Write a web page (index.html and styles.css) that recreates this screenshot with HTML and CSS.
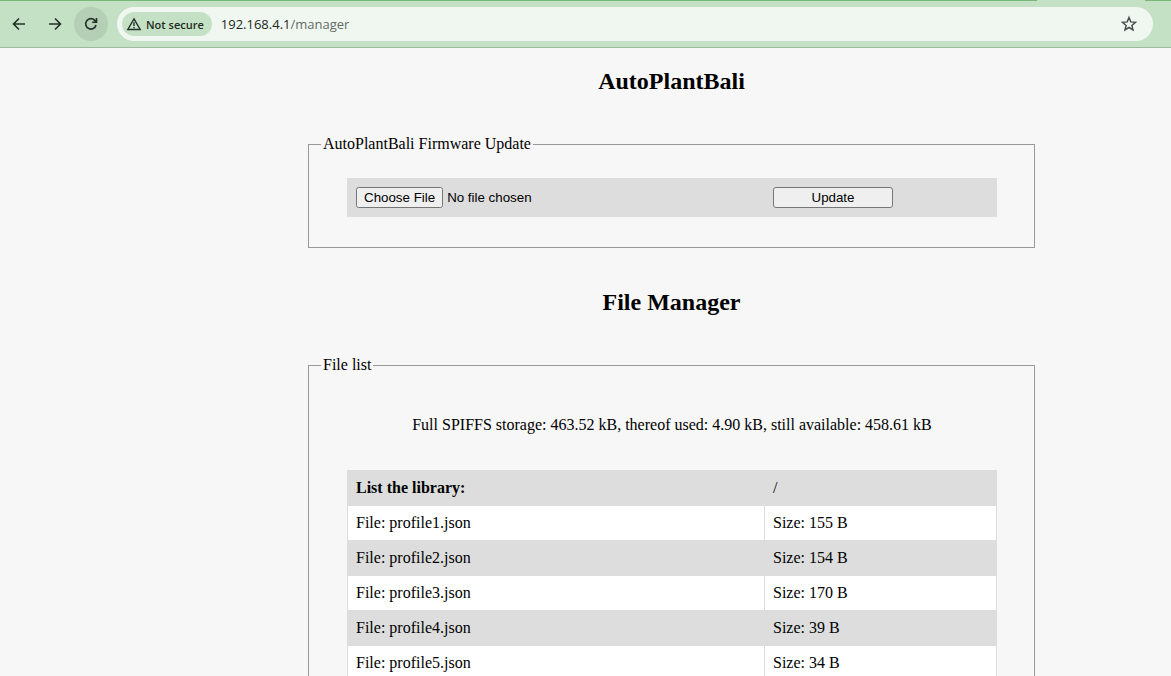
FILE: index.html
```html
<!DOCTYPE html>
<html lang="en">
<head>
<meta charset="utf-8">
<title>AutoPlantBali</title>
<link rel="stylesheet" href="styles.css">
</head>
<body>
<div class="tabstrip"><span class="active-tab"></span></div>
<header class="toolbar">
  <button class="nav" type="button" aria-label="Back"><svg width="16" height="16" viewBox="0 0 16 16"><path d="M14 8H3M8 2.5 2.5 8 8 13.5"/></svg></button>
  <button class="nav" type="button" aria-label="Forward"><svg width="16" height="16" viewBox="0 0 16 16"><path d="M2 8h11M8 2.5 13.500 8 8 13.500"/></svg></button>
  <button class="nav reload" type="button" aria-label="Reload"><svg width="16" height="16" viewBox="0 0 16 16"><path d="M13 9A5.200 5.200 0 1 1 11.800 4.400L13.500 6M13.500 2v4.300H9.200"/></svg></button>
  <div class="address">
    <button class="security" type="button"><svg width="16" height="16" viewBox="0 0 16 16"><path d="M8 2.800 14.200 13.500H1.800ZM8 6.200v3.800M8 11v1.300"/></svg>Not secure</button>
    <span class="url">192.168.4.1<span class="path">/manager</span></span>
    <button class="star" type="button" aria-label="Bookmark"><svg width="18" height="18" viewBox="0 0 18 18"><path d="M9 2.500l1.800 4.400 4.700.4-3.600 3.100 1.100 4.600L9 12.500 5 15l1.100-4.600L2.500 7.300l4.700-.4Z"/></svg></button>
  </div>
</header>
<main class="page">
  <h2>AutoPlantBali</h2>
  <fieldset>
    <legend>AutoPlantBali Firmware Update</legend>
    <form>
      <table>
        <tr>
          <td class="name"><input type="file" aria-label="Firmware file"></td>
          <td><button class="update" type="button">Update</button></td>
        </tr>
      </table>
    </form>
  </fieldset>
  <h2>File Manager</h2>
  <fieldset>
    <legend>File list</legend>
    <p class="storage">Full SPIFFS storage: 463.52 kB, thereof used: 4.90 kB, still available: 458.61 kB</p>
    <table>
      <tr><th class="name">List the library:</th><td>/</td></tr>
      <tr><td>File: profile1.json</td><td>Size: 155 B</td></tr>
      <tr><td>File: profile2.json</td><td>Size: 154 B</td></tr>
      <tr><td>File: profile3.json</td><td>Size: 170 B</td></tr>
      <tr><td>File: profile4.json</td><td>Size: 39 B</td></tr>
      <tr><td>File: profile5.json</td><td>Size: 34 B</td></tr>
    </table>
  </fieldset>
</main>
</body>
</html>
```

FILE: styles.css
```css
* { box-sizing: border-box; }
body {
  margin: 0;
  height: 100vh;
  overflow: hidden;
  background: #f7f7f7;
  color: #000;
  font: 16px/18px "Liberation Serif", "Times New Roman", serif;
}

/* Browser toolbar */
.tabstrip {
  display: flex;
  justify-content: flex-end;
  height: 1px;
  padding-right: 26px;
  background: #76b978;
}
.active-tab { width: 108px; background: #c5e1c5; }
.toolbar {
  display: flex;
  align-items: center;
  gap: 2px;
  height: 47px;
  padding: 0 18px 0 2px;
  background: #c5e1c5;
  border-bottom: 1px solid #9dba9d;
  font-family: "Open Sans", "Noto Sans", sans-serif;
}
.toolbar button {
  display: flex;
  align-items: center;
  justify-content: center;
  padding: 0;
  border: 0;
  background: none;
  font-family: inherit;
}
.toolbar svg {
  flex: none;
  fill: none;
  stroke: #23302a;
  stroke-width: 1.6;
}
.toolbar .nav { width: 34px; height: 34px; border-radius: 50%; }
.toolbar .reload { background: #b4cfb5; }
.address {
  display: flex;
  flex: 1;
  align-items: center;
  height: 34px;
  margin-left: 7px;
  padding: 0 15px 0 5px;
  border-radius: 17px;
  background: #f0f7f0;
}
.toolbar .security {
  gap: 4px;
  height: 24px;
  padding: 0 8px 0 4px;
  border-radius: 12px;
  background: #c5e1c5;
  color: #1f2a23;
  font-size: 11px;
  font-weight: 600;
}
.security svg { stroke-width: 1.4; }
.url { flex: 1; padding-left: 9px; color: #202622; font-size: 13px; }
.path { color: #646b66; }
.toolbar .star svg { stroke: #4b504c; stroke-width: 1.5; }

/* Manager page */
.page { padding: 19px 136px 0 308px; }
h2 {
  margin: 0;
  font-size: 24px;
  line-height: 28px;
  text-align: center;
}
fieldset {
  margin: 40px 0;
  padding: 25px 37px 30px 38px;
  border: 1px solid #999;
}
legend { margin-left: -26px; padding: 0 2px; }
table {
  width: 100%;
  border-collapse: collapse;
  table-layout: fixed;
}
td, th {
  height: 35px;
  padding: 8px;
  border: 1px solid #ddd;
  text-align: left;
}
.name { width: 417px; }
tr { background: #fff; }
tr:nth-child(odd) { background: #ddd; }
.storage { margin: 17px 0 36px; text-align: center; }
input, .update {
  display: block;
  font-family: "Liberation Sans", Arial, sans-serif;
}
.update {
  width: 120px;
  height: 21px;
  padding: 0;
  border: 1px solid #767676;
  border-radius: 3px;
  background: #efefef;
  color: #000;
}
```
